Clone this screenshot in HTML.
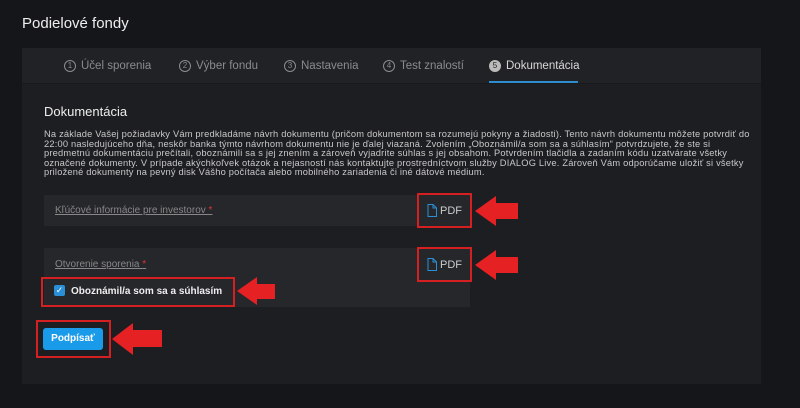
<!DOCTYPE html>
<html><head><meta charset="utf-8"><style>
*{margin:0;padding:0;box-sizing:border-box}
body{width:800px;height:408px;background:#151619;font-family:"Liberation Sans",sans-serif;color:#ddd;position:relative;overflow:hidden}
.a{position:absolute}
.title{left:22px;top:15px;font-size:15px;color:#eee}
.panel{left:22px;top:48px;width:739px;height:336px;background:#1d1e21}
.tabs{left:22px;top:48px;width:739px;height:36px;background:#212226;border-bottom:1px solid #18191b}
.tab{top:60px;font-size:11.5px;color:#8a8b8f;white-space:nowrap}
.tab i{display:inline-block;width:12px;height:12px;border:1px solid #8a8b8f;border-radius:50%;font-style:normal;font-size:8px;text-align:center;line-height:10px;margin-right:5px;vertical-align:1px}
.act{color:#d8d8d8}.act i{background:#bbb;color:#222;border-color:#bbb}
.ul{left:489px;top:81px;width:89px;height:2px;background:#2f8ccc}
h2{position:absolute;left:44px;top:104px;font-size:13px;font-weight:normal;color:#eee}
.p{left:44px;top:130px;font-size:9.3px;line-height:9.6px;color:#c8c8c8;white-space:nowrap;letter-spacing:0.2px}
.row{background:#26272b;left:44px;width:426px}
.lbl{font-size:10px;color:#888;text-decoration:underline}
.lbl b{color:#d33;font-weight:normal}
.pdf{font-size:11px;color:#ccc;width:55px;height:35px;border:2px solid #d42020;display:flex;align-items:center;justify-content:center;gap:3px}
.rb{border:2px solid #d42020}
.btn{left:43px;top:328px;width:60px;height:22px;background:#1a9bea;border-radius:3px;color:#fff;font-size:10px;font-weight:bold;text-align:center;line-height:22px}
</style></head><body>
<div class="a title">Podielové fondy</div>
<div class="a panel"></div>
<div class="a tabs"></div>
<div class="a tab" style="left:64px"><i>1</i>Účel sporenia</div>
<div class="a tab" style="left:179px"><i>2</i>Výber fondu</div>
<div class="a tab" style="left:284px"><i>3</i>Nastavenia</div>
<div class="a tab" style="left:383px"><i>4</i>Test znalostí</div>
<div class="a tab act" style="left:489px"><i>5</i>Dokumentácia</div>
<div class="a ul"></div>
<h2>Dokumentácia</h2>
<div class="a p">Na základe Vašej požiadavky Vám predkladáme návrh dokumentu (pričom dokumentom sa rozumejú pokyny a žiadosti). Tento návrh dokumentu môžete potvrdiť do<br>22:00 nasledujúceho dňa, neskôr banka týmto návrhom dokumentu nie je ďalej viazaná. Zvolením „Oboznámil/a som sa a súhlasím“ potvrdzujete, že ste si<br>predmetnú dokumentáciu prečítali, oboznámili sa s jej znením a zároveň vyjadrite súhlas s jej obsahom. Potvrdením tlačidla a zadaním kódu uzatvárate všetky<br>označené dokumenty. V prípade akýchkoľvek otázok a nejasností nás kontaktujte prostredníctvom služby DIALOG Live. Zároveň Vám odporúčame uložiť si všetky<br>priložené dokumenty na pevný disk Vášho počítača alebo mobilného zariadenia či iné dátové médium.</div>
<div class="a row" style="top:195px;height:31px"></div>
<div class="a lbl" style="left:55px;top:205px">Kľúčové informácie pre investorov <b>*</b></div>
<div class="a row" style="top:248px;height:59px"></div>
<div class="a lbl" style="left:55px;top:259px">Otvorenie sporenia <b>*</b></div>
<div class="a pdf" style="left:417px;top:193px"><svg width="10" height="13" viewBox="0 0 10 13"><path d="M1 .5h5L9.5 4V12.5H1z M6 .5v3.5h3.5" fill="none" stroke="#2a8fd6"/></svg>PDF</div>
<div class="a pdf" style="left:417px;top:247px"><svg width="10" height="13" viewBox="0 0 10 13"><path d="M1 .5h5L9.5 4V12.5H1z M6 .5v3.5h3.5" fill="none" stroke="#2a8fd6"/></svg>PDF</div>
<div class="a rb" style="left:41px;top:277px;width:194px;height:30px"></div>
<div class="a" style="left:54px;top:285px;width:11px;height:11px;background:#2a8fd6;border-radius:2px;color:#fff;font-size:9px;line-height:11px;text-align:center">✓</div>
<div class="a" style="left:71px;top:286px;font-size:10px;font-weight:bold;color:#eee">Oboznámil/a som sa a súhlasím</div>
<div class="a rb" style="left:36px;top:320px;width:75px;height:38px"></div>
<div class="a btn">Podpísať</div>
<svg class="a" style="left:0;top:0" width="800" height="408">
<g fill="#e52124">
<polygon points="475,211 496,196 496,203 518,203 518,219 496,219 496,226"/>
<polygon points="475,265 496,250 496,257 518,257 518,273 496,273 496,280"/>
<polygon points="237,291 257,277 257,284 275,284 275,299 257,299 257,305"/>
<polygon points="112,339 133,323 133,330 162,330 162,347 133,347 133,355"/>
</g></svg>
</body></html>
